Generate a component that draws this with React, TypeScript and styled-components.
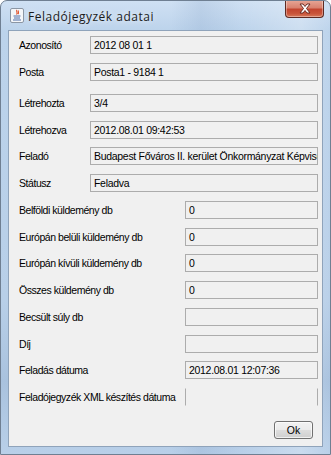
import React from "react";
import styled, { createGlobalStyle } from "styled-components";

const Global = createGlobalStyle`
  html, body { margin: 0; padding: 0; background: #ffffff; }
  body { width: 331px; height: 455px; overflow: hidden; }
`;

const Window = styled.div`
  box-sizing: border-box;
  width: 331px;
  height: 455px;
  display: flex;
  flex-direction: column;
  border: 1px solid #6f7f92;
  border-radius: 7px 7px 0 0;
  background:
    linear-gradient(90deg, rgba(255,255,255,0) 0px, rgba(255,255,255,0) 170px, rgba(120,150,190,0.18) 200px, rgba(255,255,255,0) 240px, rgba(255,255,255,0.25) 300px, rgba(255,255,255,0) 331px),
    linear-gradient(180deg, #cfe0f3 0px, #bcd3eb 30px, #b8cfe8 300px, #a9c2de 380px, #b9d0e9 455px);
  overflow: hidden;
`;

const TitleBar = styled.div`
  position: relative;
  height: 29px;
  display: flex;
  align-items: center;
  padding-left: 9px;
  gap: 4px;
  box-sizing: border-box;
`;

const Title = styled.span`
  font-family: "Open Sans", "Liberation Sans", Arial, sans-serif;
  font-size: 12px;
  letter-spacing: 0.5px;
  color: #1b1b1b;
  margin-top: 1px;
  text-shadow: 0 0 6px rgba(255,255,255,0.9);
`;

const CloseButton = styled.div`
  position: absolute;
  top: -1px;
  right: 6px;
  width: 39px;
  height: 18px;
  box-sizing: border-box;
  border: 1px solid #5e2a22;
  border-top: none;
  border-radius: 0 0 4px 4px;
  background: linear-gradient(180deg, #e8a898 0%, #d9826f 45%, #c3452f 55%, #c9553a 80%, #d8795a 100%);
  box-shadow: inset 0 0 0 1px rgba(255,255,255,0.35);
  display: flex;
  align-items: center;
  justify-content: center;
`;

const Client = styled.div`
  flex: 1;
  margin: 0 7px 7px 7px;
  border: 1px solid #8fa3ba;
  background: #f0f0f0;
  display: flex;
  flex-direction: column;
  padding: 5px 4px 0 10px;
  font-family: "Liberation Sans", Arial, sans-serif;
  font-size: 10.5px;
  color: #000;
`;

const Section = styled.div<{ $labelWidth: number; $top?: number }>`
  display: grid;
  grid-template-columns: ${(p) => p.$labelWidth}px 1fr;
  grid-auto-rows: 18px;
  row-gap: 8.75px;
  margin-top: ${(p) => p.$top ?? 0}px;
`;

const Label = styled.div`
  display: flex;
  align-items: center;
  white-space: nowrap;
  letter-spacing: -0.45px;
`;

const Field = styled.div<{ $open?: boolean }>`
  box-sizing: border-box;
  height: 18px;
  border: 1px solid #acacac;
  ${(p) => (p.$open ? "border-top-color: transparent; border-bottom-color: transparent;" : "")}
  background: #f0f0f0;
  display: flex;
  align-items: center;
  padding-left: 3px;
  white-space: nowrap;
  overflow: hidden;
  letter-spacing: -0.3px;
`;

const Footer = styled.div`
  display: flex;
  justify-content: flex-end;
  padding-right: 5px;
  margin-top: 15px;
`;

const Button = styled.button`
  box-sizing: border-box;
  width: 39px;
  height: 18px;
  border: 1px solid #707070;
  border-radius: 3px;
  background: linear-gradient(180deg, #f2f2f2 0%, #ebebeb 48%, #dddddd 52%, #cfcfcf 100%);
  box-shadow: inset 0 0 0 1px rgba(255,255,255,0.7);
  font-family: "Liberation Sans", Arial, sans-serif;
  font-size: 10.5px;
  color: #000;
  padding: 0;
`;

const JavaIcon = () => (
  <svg width="14" height="15" viewBox="0 0 14 15">
    <rect x="0.5" y="0.5" width="13" height="14" rx="1.5" fill="#f4f6f9" stroke="#8b96a4" />
    <path d="M7 2 C5.5 3.5 8.5 4.5 6.5 6.5 M8.5 2.5 C7.5 4 9.5 4.5 8 6" stroke="#e0502a" strokeWidth="1.1" fill="none" />
    <path d="M3.5 8 L10.5 8 M4 10 L10 10 M3 12 L11 12" stroke="#4f6fa8" strokeWidth="1" />
  </svg>
);

const upper: [string, string][] = [
  ["Azonosító", "2012 08 01 1"],
  ["Posta", "Posta1 - 9184 1"],
];
const upper2: [string, string][] = [
  ["Létrehozta", "3/4"],
  ["Létrehozva", "2012.08.01 09:42:53"],
  ["Feladó", "Budapest Főváros II. kerület Önkormányzat Képviselő-testülete"],
  ["Státusz", "Feladva"],
];
const lower: [string, string][] = [
  ["Belföldi küldemény db", "0"],
  ["Európán belüli küldemény db", "0"],
  ["Európán kívüli küldemény db", "0"],
  ["Összes küldemény db", "0"],
  ["Becsült súly db", ""],
  ["Díj", ""],
  ["Feladás dátuma", "2012.08.01 12:07:36"],
];

export default function App() {
  return (
    <>
      <Global />
      <Window>
        <TitleBar>
          <JavaIcon />
          <Title>Feladójegyzék adatai</Title>
          <CloseButton>
            <svg width="14" height="11" viewBox="0 0 14 11">
              <path
                d="M2 1 L5 1 L7 3.5 L9 1 L12 1 L8.5 5.5 L12 10 L9 10 L7 7.5 L5 10 L2 10 L5.5 5.5 Z"
                fill="#ffffff"
                stroke="#6a2d25"
                strokeWidth="1"
                strokeLinejoin="round"
              />
            </svg>
          </CloseButton>
        </TitleBar>
        <Client>
          <Section $labelWidth={71}>
            {upper.map(([l, v]) => (
              <React.Fragment key={l}>
                <Label>{l}</Label>
                <Field>{v}</Field>
              </React.Fragment>
            ))}
          </Section>
          <Section $labelWidth={71} $top={13}>
            {upper2.map(([l, v]) => (
              <React.Fragment key={l}>
                <Label>{l}</Label>
                <Field>{v}</Field>
              </React.Fragment>
            ))}
          </Section>
          <Section $labelWidth={166} $top={8.75}>
            {lower.map(([l, v]) => (
              <React.Fragment key={l}>
                <Label>{l}</Label>
                <Field>{v}</Field>
              </React.Fragment>
            ))}
            <Label>Feladójegyzék XML készítés dátuma</Label>
            <Field $open />
          </Section>
          <Footer>
            <Button>Ok</Button>
          </Footer>
        </Client>
      </Window>
    </>
  );
}
